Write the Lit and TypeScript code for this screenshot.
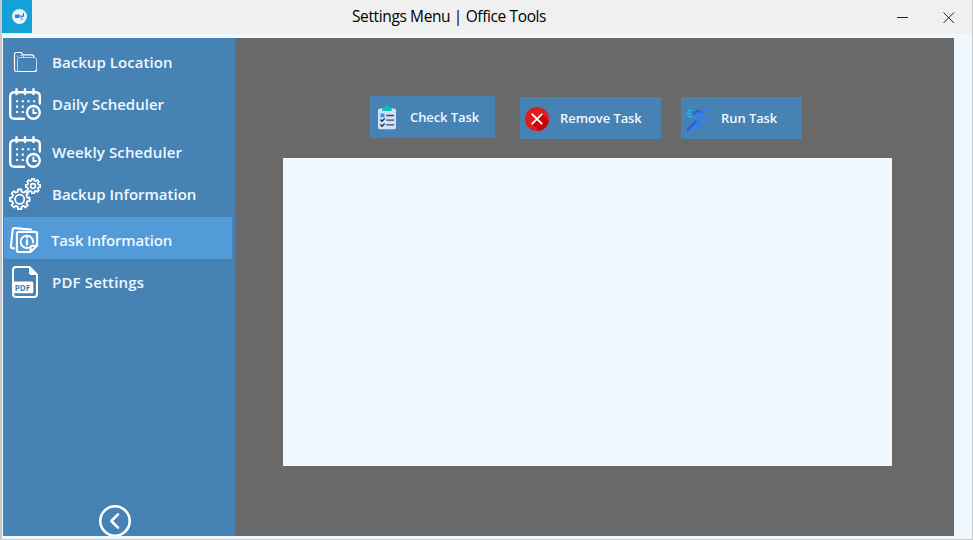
import { LitElement, html, css, svg } from "lit";
import { customElement } from "lit/decorators.js";
import { classMap } from "lit/directives/class-map.js";

const calendar = svg`<g fill="none" stroke="#fff" stroke-width="2.4" stroke-linecap="round">
  <path d="M15 30.8H5.5Q1.2 30.8 1.2 26.5V8.5Q1.2 4.2 5.5 4.2H26.5Q30.8 4.2 30.8 8.5V15.5"/>
  <path d="M7.5 1.2V6M16 1.2V6M24.5 1.2V6"/>
  <circle cx="24.4" cy="24.4" r="6.4"/><path d="M24.4 21.5V25H27" stroke-width="2"/></g>
  <path fill="none" stroke="#fff" stroke-width="2.1" stroke-dasharray="2.1 3.6" d="M7 13.2H27M7 18.6H16M7 24H16"/>`;

// Outline of a gear centred on (cx, cy) with eight flat teeth.
const gearPath = (cx: number, cy: number, inner: number, outer: number) => {
  const points: string[] = [];
  for (let i = 0; i < 8; i++) {
    for (const [offset, r] of [[-0.3, inner], [-0.22, outer], [0.22, outer], [0.3, inner]]) {
      const a = ((i + offset) * Math.PI) / 4;
      points.push(`${(cx + r * Math.cos(a)).toFixed(2)} ${(cy + r * Math.sin(a)).toFixed(2)}`);
    }
  }
  return `M${points.join("L")}Z`;
};

const icons = {
  folder: svg`<g fill="none" stroke="#fff" stroke-linejoin="round">
    <path stroke-width="1.2" d="M8.5 25.5H7.2Q5.5 25.5 5.5 23.8V8.2Q5.5 6.5 7.2 6.5H12.2L14.2 8.8H23Q25 8.8 25 11"/>
    <path stroke-width="1" stroke-opacity=".65" d="M8.5 25.5V13.5Q8.5 11.5 10.5 11.5H25.5Q27.5 11.5 27.5 13.5V23.5Q27.5 25.5 25.5 25.5ZM8.2 11V9.5M11 9.5H13L15 11"/>
    <path stroke-width="1.2" d="M8.5 25.5H25.5Q27.5 25.5 27.5 23.5"/></g>`,
  calendar,
  gears: svg`<g fill="none" stroke="#fff" stroke-width="1.8" stroke-linejoin="round">
    <path d="${gearPath(10.7, 21.3, 7.8, 10)}"/><circle cx="10.7" cy="21.3" r="4.6"/>
    <path stroke-width="1.6" d="${gearPath(24, 8, 5.6, 7.4)}"/><circle cx="24" cy="8" r="2.4" stroke-width="1.6"/></g>`,
  info: svg`<g fill="none" stroke="#fff" stroke-width="2.1" stroke-linejoin="round" stroke-linecap="round">
    <path d="M5 24.4L3.6 24.2Q1.8 23.9 2 22.1L3.6 6Q3.9 4 5.8 4.1L22 5.5"/>
    <path d="M21.5 28H10Q7.9 28 7.9 25.9V10Q7.9 7.9 10 7.9H26Q28.1 7.9 28.1 10V21.5L21.5 28V24Q21.5 21.7 24 21.7H28"/>
    <path stroke-width="1.9" d="M20 23.6A6.2 6.2 0 1 1 24 18.6"/>
    <path stroke-width="2.3" d="M18 16.5V20.5M18 13.4V13.5"/></g>`,
  pdf: svg`<path d="M4 16V4Q4 1 7 1H20.5L28 8.5V28Q28 31 25 31H7Q4 31 4 28V27" fill="none" stroke="#fff" stroke-width="2"/>
    <path d="M20 1L28.5 9H22Q20 9 20 7Z" fill="#fff"/><rect x="3" y="15.6" width="21.3" height="11.6" rx="1.5" fill="#fff"/>
    <text x="5.7" y="24.7" textLength="15.5" lengthAdjust="spacingAndGlyphs" class="pdf-label">PDF</text>`,
  clipboard: svg`<rect x="3" y="3.5" width="18" height="20.7" rx="1.8" fill="#d5e0f5"/>
    <path d="M7.3 6V4Q7.3 2.5 8.8 2.5H9.5Q10.2 .5 12 .5T14.5 2.5H15.2Q16.7 2.5 16.7 4V6Z" fill="#06c7b1"/>
    <rect x="5.5" y="8.5" width="4" height="3.8" fill="#0aa5f5"/>
    <path d="M11.3 10.5H19M11.3 15.1H19M11.3 19.9H19" stroke="#2c4b70" stroke-width="1.3"/>
    <path d="M5.3 14.6L7 16.2L9.7 13.6M5.3 19.6L7 21.2L9.7 18.6" fill="none" stroke="#163454" stroke-width="1.4"/>`,
  remove: svg`<circle cx="12" cy="13" r="12" fill="#e21b1b"/>
    <path d="M16.9 8.1L23.6 15A12 12 0 0 1 14 24.8L7.1 17.9L12 13Z" fill="#c40606"/>
    <path d="M7.3 8.3L16.7 17.7M16.7 8.3L7.3 17.7" stroke="#fff" stroke-width="1.9" stroke-linecap="round"/>`,
  run: svg`<g fill="none" stroke-linecap="round" stroke-linejoin="round">
    <path d="M2 23.5L9.8 15.6" stroke="#2962e8" stroke-width="2.8"/>
    <path d="M8.2 7.7L11.8 4.4L15.5 6.6" stroke="#2962e8" stroke-width="2.5"/>
    <path d="M15.8 7.4L11 13L15 17.2L11 23.4" stroke="#2e7dfa" stroke-width="2.8"/>
    <path d="M16.8 8.5L18.2 12.2H23" stroke="#2e7dfa" stroke-width="2.2"/></g>
    <circle cx="20.4" cy="4" r="2.1" fill="#2e7dfa"/>
    <path d="M2 4.5H6M0 7.5H4.8M2 10.5H6" stroke="#20bceb" stroke-width="1.3"/>`,
};

type IconName = keyof typeof icons;

const menu: { label: string; icon: IconName; key: string }[] = [
  { label: "Backup Location", icon: "folder", key: "location" },
  { label: "Daily Scheduler", icon: "calendar", key: "daily" },
  { label: "Weekly Scheduler", icon: "calendar", key: "weekly" },
  { label: "Backup Information", icon: "gears", key: "backup" },
  { label: "Task Information", icon: "info", key: "task" },
  { label: "PDF Settings", icon: "pdf", key: "pdf" },
];

const actions: { label: string; icon: IconName; key: string }[] = [
  { label: "Check Task", icon: "clipboard", key: "check" },
  { label: "Remove Task", icon: "remove", key: "remove" },
  { label: "Run Task", icon: "run", key: "run" },
];

@customElement("app-root")
export class AppRoot extends LitElement {
  static styles = css`
    :host {
      display: flex; flex-direction: column; box-sizing: border-box;
      width: 973px; height: 540px; overflow: hidden;
      background: #f0f8ff; color: #f0f8ff;
      border: solid #c8c9cc; border-width: 0 1px 1px 2px;
      font-family: "Open Sans", "Noto Sans", sans-serif;
    }
    button { border: 0; padding: 0; margin: 0; background: none; color: inherit; font: inherit; text-align: left; }
    svg { display: block; flex: none; }
    .titlebar { flex: none; height: 34px; display: flex; background: #f0f0f0; color: #000; }
    .logo { width: 30px; height: 33px; background: #14a2d6; }
    .title { margin-left: 320px; width: 545px; font-size: 15.5px; letter-spacing: -0.38px; line-height: 32px; white-space: pre; }
    .controls { display: flex; align-items: center; gap: 35px; padding-top: 1px; }
    .body { flex: none; display: flex; height: 498px; width: 951px; margin: 4px 0 0 1px; background: #696969; }
    .sidebar { width: 232px; height: 498px; padding-top: 1px; box-sizing: border-box; background: #4682b4;
      display: flex; flex-direction: column; overflow: hidden; }
    .item { flex: none; height: 42px; width: 228px; margin-left: 1px; padding-left: 5px; display: flex; align-items: center;
      box-sizing: border-box; font-size: 15px; font-weight: 600; line-height: 20px; white-space: nowrap; }
    .item svg { margin: 4px 11px 0 0; }
    .item span { padding-top: 4px; }
    .location { letter-spacing: 0.06px; }
    .weekly { margin-top: 6px; letter-spacing: 0.12px; }
    .task { margin-top: 4px; background: #539ad8; letter-spacing: -0.18px; }
    .task span { margin-left: -1px; }
    .pdf { letter-spacing: 0.16px; }
    .pdf svg { letter-spacing: 0; }
    .back { flex: none; margin: auto 0 -1px 96px; width: 32px; height: 32px; }
    .content { flex: 1; padding: 58px 0 0 48px; }
    .actions { display: flex; align-items: flex-start; margin-left: 87px; }
    .action { height: 42px; display: flex; align-items: center; box-sizing: border-box; padding-left: 5px; background: #4682b4;
      font-size: 13px; font-weight: 600; letter-spacing: -0.08px; white-space: nowrap; line-height: 18px; }
    .action svg { margin-right: 11px; }
    .check { width: 125px; margin-right: 25px; }
    .remove { width: 141px; margin: 1px 20px 0 0; }
    .run { width: 121px; margin-top: 1px; }
    .output { width: 609px; height: 308px; margin-top: 19px; background: #f0f8ff; }
    .pdf-label { font: 700 8.5px "Open Sans", sans-serif; fill: #4682b4; }
  `;

  render() {
    return html`
      <header class="titlebar">
        <svg class="logo" viewBox="0 0 30 33">
          <circle cx="17.5" cy="16.5" r="7.5" fill="#e9f4fd"/>
          <path d="M13 14.5H17.6V18H13Z" fill="#168be0"/>
          <path d="M18.4 15.5H21.5V17.2H18.4ZM18.5 18.6H20.8V19.6H18.5ZM21 13H22V16H21Z" fill="#2676e8"/>
        </svg>
        <div class="title">Settings Menu | Office Tools</div>
        <div class="controls">
          <svg width="11" height="12" viewBox="0 0 11 12"><path d="M0 5.5H11" stroke="#222"/></svg>
          <svg width="12" height="12" viewBox="0 0 12 12"><path d="M.5 .5L11 11M11 .5L.5 11" stroke="#222"/></svg>
        </div>
      </header>
      <main class="body">
        <nav class="sidebar">
          ${menu.map((m) => html`<button class=${classMap({ item: true, [m.key]: true })}>
            <svg width="32" height="32" viewBox="0 0 32 32">${icons[m.icon]}</svg><span>${m.label}</span>
          </button>`)}
          <button class="back" aria-label="Back">
            <svg width="32" height="32" viewBox="0 0 32 32" fill="none" stroke="#fff" stroke-linecap="round" stroke-linejoin="round">
              <circle cx="16" cy="16" r="14.7" stroke-width="2.6"/><path d="M19 9.3L12.3 16L19 22.7" stroke-width="2.6"/>
            </svg>
          </button>
        </nav>
        <section class="content">
          <div class="actions">
            ${actions.map((a) => html`<button class=${classMap({ action: true, [a.key]: true })}>
              <svg width="24" height="25" viewBox="0 0 24 25">${icons[a.icon]}</svg><span>${a.label}</span>
            </button>`)}
          </div>
          <div class="output"></div>
        </section>
      </main>`;
  }
}
